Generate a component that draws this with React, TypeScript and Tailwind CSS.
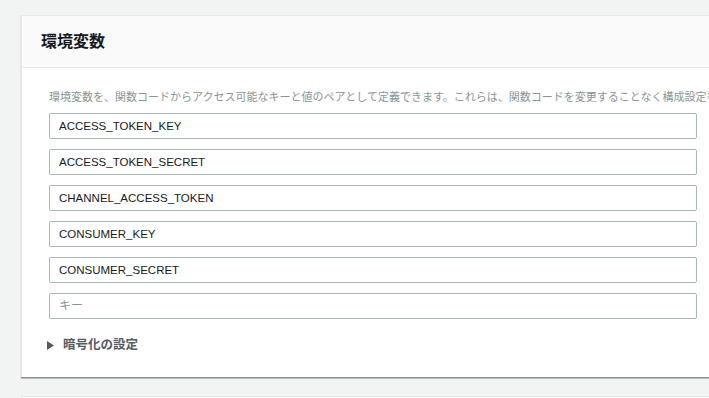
import React from "react";

const keys = ["ACCESS_TOKEN_KEY", "ACCESS_TOKEN_SECRET", "CHANNEL_ACCESS_TOKEN", "CONSUMER_KEY", "CONSUMER_SECRET"];

const font = { fontFamily: '"Liberation Sans", "Noto Sans CJK JP", sans-serif' };

export default function App() {
  return (
    <div className="h-[398px] w-[709px] overflow-hidden bg-[#f2f3f3] pt-[15px] pl-[21px]" style={font}>
      <div className="w-[703px] bg-white border-l border-t border-[#e5e8e8] shadow-[0_1px_1px_0_rgba(0,28,36,0.3),0_2px_0_0_rgba(0,28,36,0.2)]">
        <div className="h-[52px] bg-[#fafafa] border-b border-[#eaeded] flex items-center pl-[19px]">
          <h2 className="text-[16px] font-bold text-[#16191f]">環境変数</h2>
        </div>
        <div className="pt-[21px] pb-[24px] pl-[27px] pr-[27px]">
          <p className="text-[11px] leading-[16px] text-[#879596] whitespace-nowrap">
            環境変数を、関数コードからアクセス可能なキーと値のペアとして定義できます。これらは、関数コードを変更することなく構成設定を保存するのに便利です。
          </p>
          <div className="mt-[8px] flex flex-col gap-[10px]">
            {keys.map((k) => (
              <input
                key={k}
                readOnly
                value={k}
                className="h-[26px] w-full border border-[#aab7b8] rounded-[2px] px-[9px] text-[11.5px] text-[#16191f] outline-none bg-white"
                style={font}
              />
            ))}
            <input
              readOnly
              placeholder="キー"
              className="h-[26px] w-full border border-[#aab7b8] rounded-[2px] px-[9px] text-[12px] text-[#16191f] placeholder:text-[#879596] outline-none bg-white"
              style={font}
            />
          </div>
          <div className="mt-[18px] flex items-center gap-[9px] h-[16px]">
            <svg width="7" height="9" viewBox="0 0 7 9" className="ml-[-2px]">
              <path d="M0 0 L7 4.5 L0 9 Z" fill="#545b64" />
            </svg>
            <span className="text-[12.5px] font-bold text-[#545b64] leading-[16px]">暗号化の設定</span>
          </div>
        </div>
      </div>
      <div className="mt-[19px] w-[703px] h-[40px] bg-white border-l border-t border-[#e5e8e8]" />
    </div>
  );
}
